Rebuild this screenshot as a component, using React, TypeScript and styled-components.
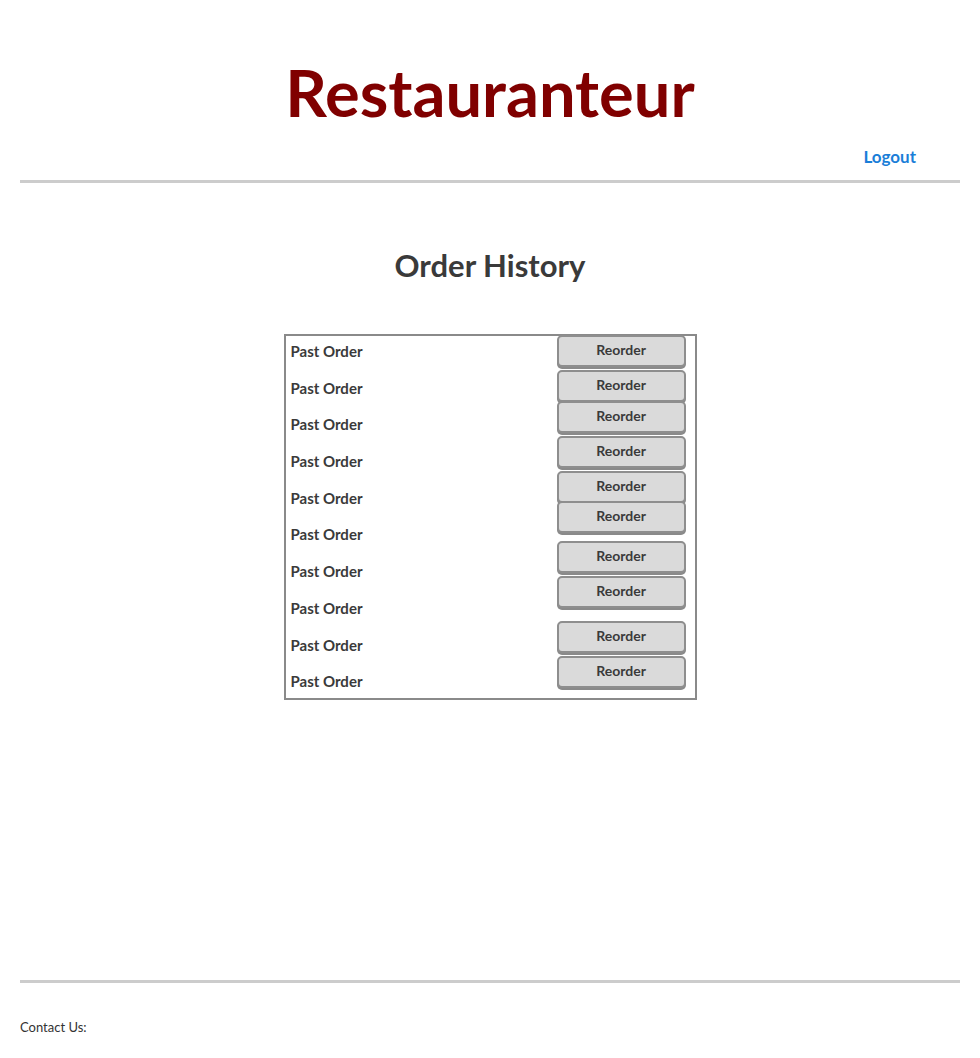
import React from "react";
import styled, { createGlobalStyle } from "styled-components";

const Global = createGlobalStyle`
  html, body { margin: 0; padding: 0; background: #fff; }
  body { font-family: Lato, "Open Sans", sans-serif; color: #333; }
`;

const Page = styled.div`
  padding: 0 20px;
  min-height: 1058px;
  display: flex;
  flex-direction: column;
`;

const Header = styled.header`
  display: flex;
  flex-direction: column;
  border-bottom: 3px solid #cccccc;
`;

const Title = styled.h1`
  margin: 52px 0 0;
  text-align: center;
  font-size: 65px;
  line-height: 80px;
  font-weight: 700;
  color: #800000;
`;

const Nav = styled.nav`
  display: flex;
  justify-content: flex-end;
  padding: 14px 44px 13px 0;
`;

const NavLink = styled.a`
  color: #1a7ed8;
  font-weight: 700;
  font-size: 17px;
  text-decoration: none;
`;

const Main = styled.main`
  flex: 1;
  display: flex;
  flex-direction: column;
  align-items: center;
`;

const Heading = styled.h2`
  margin: 62px 0 0;
  font-size: 31px;
  line-height: 40px;
  font-weight: 700;
  color: #3a3a3a;
`;

const Box = styled.div`
  box-sizing: border-box;
  margin-top: 49px;
  width: 413px;
  border: 2px solid #8a8a8a;
  display: grid;
  grid-template-columns: 1fr auto;
  padding-right: 9px;
`;

const Labels = styled.div`
  display: flex;
  flex-direction: column;
  gap: 16.7px;
  padding: 5px 0 7px 5px;
`;

const Label = styled.div`
  line-height: 20px;
  font-size: 15px;
  font-weight: 700;
  color: #3a3a3a;
`;

const Buttons = styled.div`
  display: flex;
  flex-direction: column;
  padding-bottom: 5px;
`;

const Button = styled.button<{ $shift: number }>`
  margin-top: ${(p) => p.$shift}px;
  width: 129px;
  height: 32px;
  margin-bottom: 3px;
  background: #dadada;
  border: 2px solid #8e8e8e;
  border-radius: 5px;
  box-shadow: 0 2px 0 #8a8a8a;
  font-family: Lato, "Open Sans", sans-serif;
  font-size: 14px;
  font-weight: 700;
  color: #3a3a3a;
  padding: 0 0 4px;
  cursor: pointer;
`;

const Footer = styled.footer`
  border-top: 3px solid #cccccc;
  padding: 36px 0 23px;
  font-size: 13px;
  color: #333;
`;

const shifts = [-1, 0, -4, 0, 0, -5, 5, 0, 10, 0];

export default function App() {
  return (
    <>
      <Global />
      <Page>
        <Header>
          <Title>Restauranteur</Title>
          <Nav>
            <NavLink href="#">Logout</NavLink>
          </Nav>
        </Header>
        <Main>
          <Heading>Order History</Heading>
          <Box>
            <Labels>
              {shifts.map((_, i) => (
                <Label key={i}>Past Order</Label>
              ))}
            </Labels>
            <Buttons>
              {shifts.map((s, i) => (
                <Button key={i} $shift={s}>
                  Reorder
                </Button>
              ))}
            </Buttons>
          </Box>
        </Main>
        <Footer>Contact Us:</Footer>
      </Page>
    </>
  );
}
